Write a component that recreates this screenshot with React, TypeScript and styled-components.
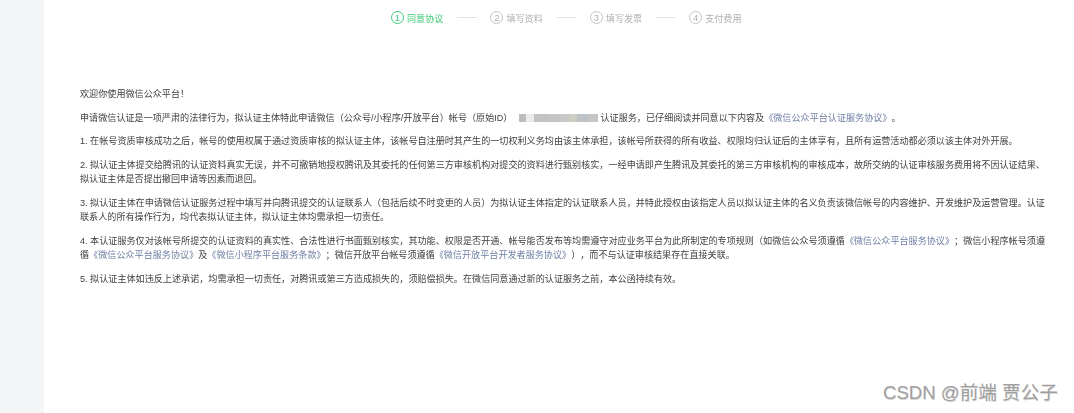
import React from "react";
import styled, { createGlobalStyle } from "styled-components";

const GlobalStyle = createGlobalStyle`
  html, body {
    margin: 0;
    padding: 0;
    background: #f4f5f7;
  }
  body {
    font-family: "Liberation Sans", "Noto Sans CJK SC", sans-serif;
  }
`;

const Page = styled.div`
  position: relative;
  width: 1074px;
  height: 413px;
  overflow: hidden;
  display: flex;
  background: #f4f5f7;
`;

const Main = styled.main`
  margin-left: 44px;
  flex: 1;
  background: #fff;
  padding-top: 10px;
  box-sizing: border-box;
  filter: blur(0.3px);
`;

const Steps = styled.ol`
  list-style: none;
  margin: 0 0 0 347px;
  padding: 0;
  height: 15px;
  display: flex;
  align-items: center;
`;

const Step = styled.li<{ $active?: boolean }>`
  display: flex;
  align-items: center;
  gap: 3px;
  font-size: 9.1px;
  color: ${(p) => (p.$active ? "#3ecb78" : "#b0b0b0")};
`;

const StepNo = styled.span<{ $active?: boolean }>`
  box-sizing: border-box;
  width: 13px;
  height: 13px;
  border-radius: 50%;
  border: 1px solid ${(p) => (p.$active ? "#3ecb78" : "#c4c4c4")};
  display: flex;
  align-items: center;
  justify-content: center;
  font-size: 9.5px;
`;

const StepLine = styled.span`
  width: 20px;
  height: 1px;
  background: #e4e4e4;
  margin: 0 13.5px;
`;

const Agreement = styled.article`
  margin: 62px 0 0 36px;
  width: 966px;
  font-size: 9.1px;
  line-height: 14.5px;
  color: #414141;
  text-spacing-trim: space-all;
`;

const Para = styled.p`
  margin: 0 0 9px;
`;

const AgreementLink = styled.a`
  color: #6f7fa3;
`;

const Redacted = styled.span`
  display: inline-flex;
  width: 79px;
  height: 8px;
  margin: 0 2px 0 7px;
  vertical-align: -1px;
`;

const RedactedBlock = styled.span<{ $w: number; $c: string }>`
  width: ${(p) => p.$w}px;
  height: 8px;
  background: ${(p) => p.$c};
`;

const Watermark = styled.div`
  position: absolute;
  left: 883px;
  top: 382px;
  font-size: 18.6px;
  line-height: 22px;
  color: #a0a0a0;
  text-shadow: 0.5px 0.5px 0 #d8d8d8;
  white-space: nowrap;
`;

const steps = ["同意协议", "填写资料", "填写发票", "支付费用"];

const mosaic: [number, string][] = [
  [7, "#bdbdbd"],
  [8, "#ececec"],
  [14, "#c3c3c3"],
  [12, "#c6c4c6"],
  [9, "#c8c8c8"],
  [8, "#cdcfc4"],
  [11, "#bcc2c8"],
  [10, "#c6c6c6"],
];

export default function App() {
  return (
    <>
      <GlobalStyle />
      <Page>
        <Main>
          <Steps>
            {steps.map((s, i) => (
              <React.Fragment key={s}>
                {i > 0 && <StepLine />}
                <Step $active={i === 0}>
                  <StepNo $active={i === 0}>{i + 1}</StepNo>
                  {s}
                </Step>
              </React.Fragment>
            ))}
          </Steps>
          <Agreement>
            <Para>欢迎你使用微信公众平台！</Para>
            <Para>
              申请微信认证是一项严肃的法律行为，拟认证主体特此申请微信（公众号/小程序/开放平台）帐号（原始ID）
              <Redacted>
                {mosaic.map(([w, c], i) => (
                  <RedactedBlock key={i} $w={w} $c={c} />
                ))}
              </Redacted>
              认证服务，已仔细阅读并同意以下内容及<AgreementLink>《微信公众平台认证服务协议》</AgreementLink>。
            </Para>
            <Para>
              1. 在帐号资质审核成功之后，帐号的使用权属于通过资质审核的拟认证主体，该帐号自注册时其产生的一切权利义务均由该主体承担，该帐号所获得的所有收益、权限均归认证后的主体享有，且所有运营活动都必须以该主体对外开展。
            </Para>
            <Para>
              2. 拟认证主体提交给腾讯的认证资料真实无误，并不可撤销地授权腾讯及其委托的任何第三方审核机构对提交的资料进行甄别核实，一经申请即产生腾讯及其委托的第三方审核机构的审核成本，故所交纳的认证审核服务费用将不因认证结果、拟认证主体是否提出撤回申请等因素而退回。
            </Para>
            <Para>
              3. 拟认证主体在申请微信认证服务过程中填写并向腾讯提交的认证联系人（包括后续不时变更的人员）为拟认证主体指定的认证联系人员，并特此授权由该指定人员以拟认证主体的名义负责该微信帐号的内容维护、开发维护及运营管理。认证联系人的所有操作行为，均代表拟认证主体，拟认证主体均需承担一切责任。
            </Para>
            <Para>
              4. 本认证服务仅对该帐号所提交的认证资料的真实性、合法性进行书面甄别核实，其功能、权限是否开通、帐号能否发布等均需遵守对应业务平台为此所制定的专项规则（如微信公众号须遵循
              <AgreementLink>《微信公众平台服务协议》</AgreementLink>；微信小程序帐号须遵循
              <AgreementLink>《微信公众平台服务协议》</AgreementLink>及<AgreementLink>《微信小程序平台服务条款》</AgreementLink>；微信开放平台帐号须遵循
              <AgreementLink>《微信开放平台开发者服务协议》</AgreementLink>），而不与认证审核结果存在直接关联。
            </Para>
            <Para>
              5. 拟认证主体如违反上述承诺，均需承担一切责任，对腾讯或第三方造成损失的，须赔偿损失。在微信同意通过新的认证服务之前，本公函持续有效。
            </Para>
          </Agreement>
        </Main>
        <Watermark>CSDN @前端 贾公子</Watermark>
      </Page>
    </>
  );
}
